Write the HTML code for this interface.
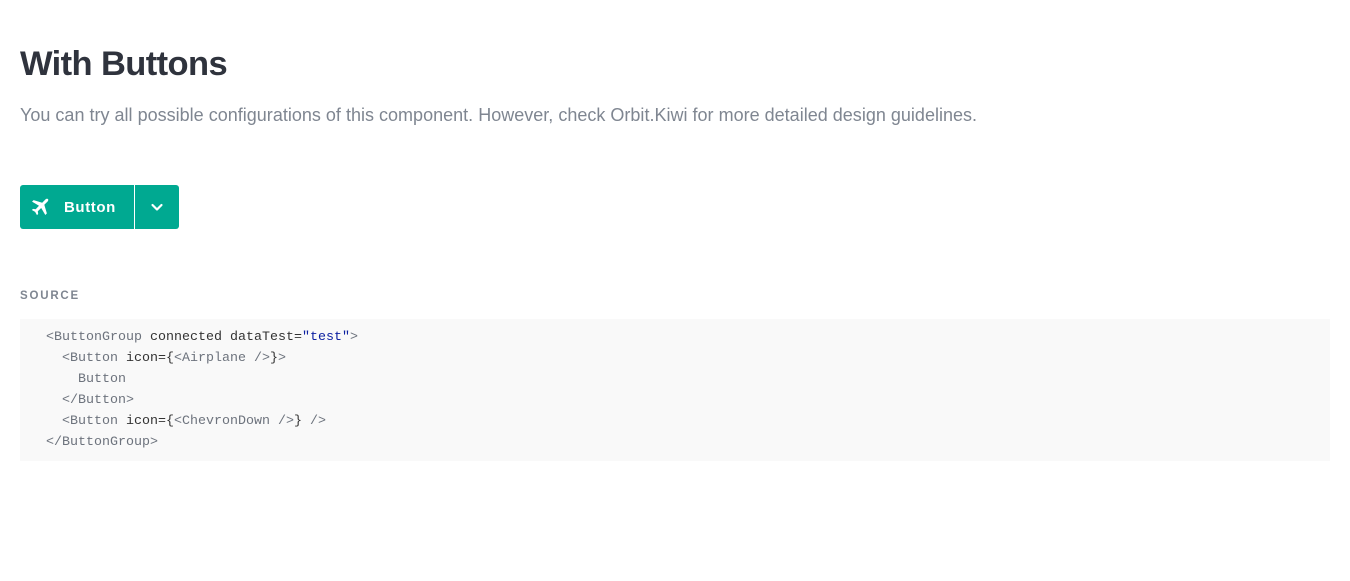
<!DOCTYPE html>
<html><head><style>
body{margin:0;background:#fff;font-family:"Liberation Sans",sans-serif;width:1350px;height:581px;overflow:hidden}
h1{position:absolute;left:20px;top:45px;margin:0;font-size:34.5px;font-weight:bold;color:#2f333d;letter-spacing:-0.6px}
p{position:absolute;left:20px;top:105px;margin:0;font-size:18px;color:#7f8691;letter-spacing:0.01px}
.grp{position:absolute;left:20px;top:185px;height:44px;display:flex}
.b1{width:114px;height:44px;background:#00a991;border-radius:3px 0 0 3px;display:flex;align-items:center;color:#fff;font-weight:bold;font-size:15px;letter-spacing:0.6px}
.b2{width:44px;height:44px;background:#00a991;border-radius:0 3px 3px 0;margin-left:1px;display:flex;align-items:center;justify-content:center}
.src{position:absolute;left:20px;top:290px;font-size:11.5px;font-weight:bold;letter-spacing:1.8px;color:#7f8691}
pre{position:absolute;left:20px;top:319px;width:1310px;height:142px;margin:0;background:#f9f9f9;box-sizing:border-box;padding:8px 26px;font-family:"Liberation Mono",monospace;font-size:13.33px;line-height:21px;color:#6d737d}
.k{color:#333}.s{color:#0b1fa0}
</style></head><body>
<h1>With Buttons</h1>
<p>You can try all possible configurations of this component. However, check Orbit.Kiwi for more detailed design guidelines.</p>
<div class="grp">
<div class="b1"><svg style="margin-left:9px" width="22" height="22" viewBox="0 0 24 24"><path fill="#fff" d="M21 3.5c-.8-.8-2.2-.6-3 .2l-3.6 3.6L5 4.5 3.3 6.2l7.6 4.5-3.6 3.7-2.9-.4-1.3 1.3 3.6 2 2 3.6 1.3-1.3-.4-2.9 3.7-3.6 4.5 7.6 1.7-1.7-2.8-9.4 3.6-3.6c.8-.8 1-2.200.2-3z"/></svg><span style="margin-left:13px">Button</span></div>
<div class="b2"><svg width="14" height="10" viewBox="0 0 14 10"><path d="M2.5 3l4.5 4.5L11.5 3" stroke="#fff" stroke-width="2.2" fill="none" stroke-linecap="round" stroke-linejoin="round"/></svg></div>
</div>
<div class="src">SOURCE</div>
<pre>&lt;ButtonGroup <span class="k">connected dataTest=</span><span class="s">"test"</span>&gt;
  &lt;Button <span class="k">icon={</span>&lt;Airplane /&gt;<span class="k">}</span>&gt;
    Button
  &lt;/Button&gt;
  &lt;Button <span class="k">icon={</span>&lt;ChevronDown /&gt;<span class="k">}</span> /&gt;
&lt;/ButtonGroup&gt;</pre>
</body></html>
